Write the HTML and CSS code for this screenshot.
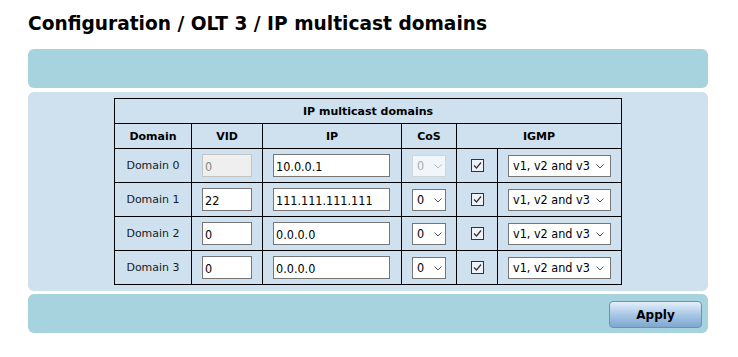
FILE: index.html
```html
<!DOCTYPE html>
<html lang="en">
<head>
  <meta charset="UTF-8">
  <title>Configuration / OLT 3 / IP multicast domains</title>
  <link rel="stylesheet" href="styles.css">
</head>
<body>
  <div class="page">
    <h1>Configuration / OLT 3 / IP multicast domains</h1>
    <div class="bar"></div>
    <div class="panel">
      <table class="grid">
        <tr><th colspan="6">IP multicast domains</th></tr>
        <tr>
          <th>Domain</th><th>VID</th><th>IP</th><th>CoS</th><th colspan="2">IGMP</th>
        </tr>
        <tr>
          <td class="name">Domain 0</td>
          <td><input class="vid" type="text" value="0" disabled></td>
          <td><input class="ip" type="text" value="10.0.0.1"></td>
          <td><span class="sel cos off"><select disabled><option>0</option></select><svg viewBox="0 0 8 5"><polyline points="0.5,0.5 4,4 7.5,0.5"/></svg></span></td>
          <td class="chk"><span class="box"><svg viewBox="0 0 11 11"><polyline points="2,5.5 4.5,8 9,2.5"/></svg></span></td>
          <td><span class="sel igmp"><select><option>v1, v2 and v3</option></select><svg viewBox="0 0 8 5"><polyline points="0.5,0.5 4,4 7.5,0.5"/></svg></span></td>
        </tr>
        <tr>
          <td class="name">Domain 1</td>
          <td><input class="vid" type="text" value="22"></td>
          <td><input class="ip" type="text" value="111.111.111.111"></td>
          <td><span class="sel cos"><select><option>0</option></select><svg viewBox="0 0 8 5"><polyline points="0.5,0.5 4,4 7.5,0.5"/></svg></span></td>
          <td class="chk"><span class="box"><svg viewBox="0 0 11 11"><polyline points="2,5.5 4.5,8 9,2.5"/></svg></span></td>
          <td><span class="sel igmp"><select><option>v1, v2 and v3</option></select><svg viewBox="0 0 8 5"><polyline points="0.5,0.5 4,4 7.5,0.5"/></svg></span></td>
        </tr>
        <tr>
          <td class="name">Domain 2</td>
          <td><input class="vid" type="text" value="0"></td>
          <td><input class="ip" type="text" value="0.0.0.0"></td>
          <td><span class="sel cos"><select><option>0</option></select><svg viewBox="0 0 8 5"><polyline points="0.5,0.5 4,4 7.5,0.5"/></svg></span></td>
          <td class="chk"><span class="box"><svg viewBox="0 0 11 11"><polyline points="2,5.5 4.5,8 9,2.5"/></svg></span></td>
          <td><span class="sel igmp"><select><option>v1, v2 and v3</option></select><svg viewBox="0 0 8 5"><polyline points="0.5,0.5 4,4 7.5,0.5"/></svg></span></td>
        </tr>
        <tr>
          <td class="name">Domain 3</td>
          <td><input class="vid" type="text" value="0"></td>
          <td><input class="ip" type="text" value="0.0.0.0"></td>
          <td><span class="sel cos"><select><option>0</option></select><svg viewBox="0 0 8 5"><polyline points="0.5,0.5 4,4 7.5,0.5"/></svg></span></td>
          <td class="chk"><span class="box"><svg viewBox="0 0 11 11"><polyline points="2,5.5 4.5,8 9,2.5"/></svg></span></td>
          <td><span class="sel igmp"><select><option>v1, v2 and v3</option></select><svg viewBox="0 0 8 5"><polyline points="0.5,0.5 4,4 7.5,0.5"/></svg></span></td>
        </tr>
      </table>
    </div>
    <div class="bar actions">
      <button class="apply" type="button">Apply</button>
    </div>
  </div>
</body>
</html>
```

FILE: styles.css
```css
body { margin: 0; background: #fff; font-family: "DejaVu Sans", Verdana, sans-serif; font-size: 11px; color: #111; }
.page { width: 680px; margin-left: 28px; }
h1 { font-family: "DejaVu Sans", sans-serif; font-size: 18.6px; font-weight: bold; margin: 0; padding-top: 12px; height: 38px; box-sizing: border-box; line-height: 24px; color: #000; white-space: nowrap; }
.bar { background: #a6d3de; border-radius: 6px; height: 39px; margin-top: 11px; }
.panel { background: #cfe1ef; border-radius: 6px; margin-top: 4px; padding: 6px 0; }
.actions { margin-top: 3px; display: flex; justify-content: flex-end; align-items: flex-start; padding: 7px 6px 0 0; box-sizing: border-box; }

.grid { border-collapse: collapse; margin: 0 auto; width: 508px; }
.grid th, .grid td { border: 1px solid #000; padding: 0; text-align: center; }
.grid th { font-weight: bold; height: 24px; color: #000; }
.grid td { height: 33px; }
.grid th:nth-child(1) { width: 76px; }
.grid th:nth-child(2) { width: 70px; }
.grid th:nth-child(3) { width: 138px; }
.grid th:nth-child(4) { width: 54px; }
.name { color: #1a1a1a; }
.chk { width: 40px; }

input[type=text] { font-family: "DejaVu Sans Condensed", "DejaVu Sans", sans-serif; font-size: 12.5px; height: 23px; box-sizing: border-box; border: 1px solid #767676; background: #fff; color: #000; padding: 1px 2px 0; margin: 0; display: block; }
.vid { width: 50px; margin: 0 auto 0 10px !important; }
.ip { width: 117px; margin: 0 auto 0 10px !important; }
input[disabled] { background: #efefef; border-color: #c4c4c4; color: #888; }

.sel { position: relative; display: block; }
.sel select { appearance: none; -webkit-appearance: none; font-family: "DejaVu Sans Condensed", "DejaVu Sans", sans-serif; font-size: 12.5px; height: 22px; border: 1px solid #767676; border-radius: 0; background: #fff; color: #000; padding: 0 0 0 4px; margin: 0; display: block; }
.sel svg { position: absolute; top: 9px; width: 8px; height: 5px; fill: none; stroke: #555; stroke-width: 1; }
.cos select { width: 34px; margin-left: 10px; }
.cos svg { left: 32px; }
.off select { background: #fff; border-color: #d0d0d0; color: #999; }
.off svg { stroke: #bbb; }
.igmp select { width: 103px; margin-left: 10px; }
.igmp svg { left: 98px; }

.box { display: inline-block; width: 13px; height: 13px; box-sizing: border-box; border: 1px solid #333; background: #eef2f6; vertical-align: middle; }
.box svg { display: block; width: 11px; height: 11px; fill: none; stroke: #333; stroke-width: 1.2; }

.apply { width: 93px; height: 27px; border: 1px solid #6f8fb8; border-radius: 4px; background: linear-gradient(#e4f0fb, #a9c8e6 50%, #7fa7cf); font-family: "DejaVu Sans", sans-serif; font-weight: bold; font-size: 12px; color: #000; cursor: pointer; padding: 0; }
```
